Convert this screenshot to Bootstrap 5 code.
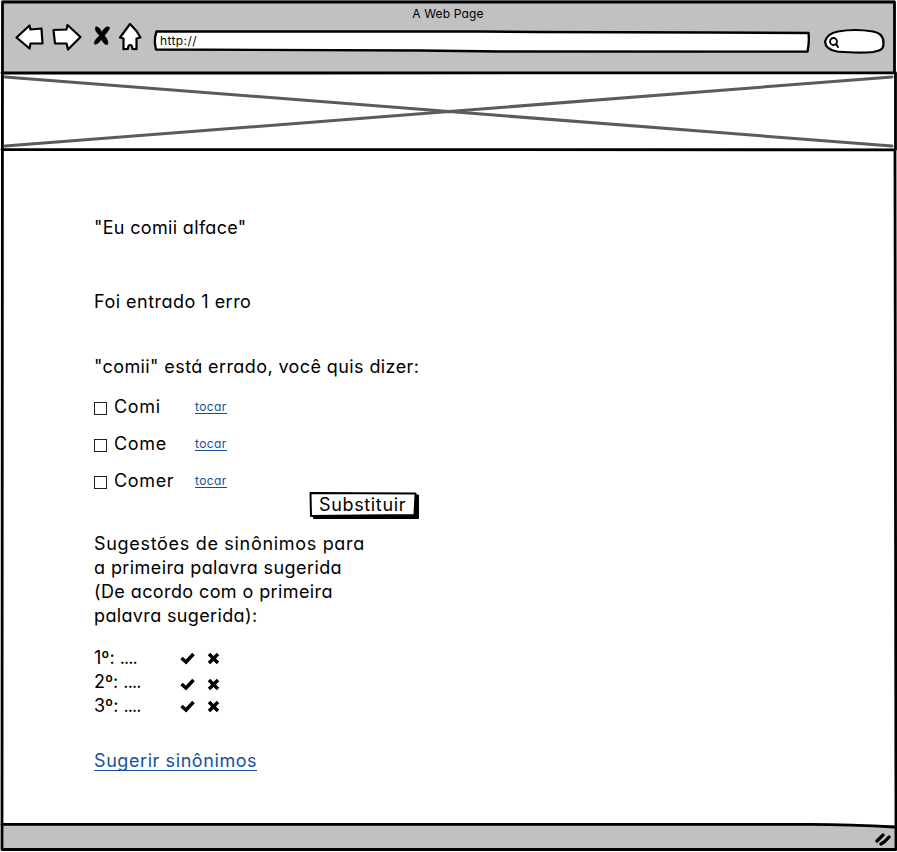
<!DOCTYPE html>
<html lang="pt-BR">
<head>
<meta charset="utf-8">
<meta name="viewport" content="width=device-width, initial-scale=1">
<title>A Web Page</title>
<link href="https://cdn.jsdelivr.net/npm/bootstrap@5.3.0/dist/css/bootstrap.min.css" rel="stylesheet">
<style>
body{font-family:Inter,"Open Sans",sans-serif;font-feature-settings:"cv11" 1,"calt" 0;font-size:18px;line-height:24px;color:#000;background:#fff}
svg{display:block;fill:none;stroke:#000;stroke-linecap:round;stroke-linejoin:round}
.window{width:897px;height:852px;overflow:hidden}
.chrome{background:#c1c1c1;height:72px;margin:0 2px;padding:5px 9px 0 13px}
.chrome-title{font-size:12px;line-height:17px;letter-spacing:.15px;padding-right:5px}
.tools{height:40px}
.address{width:658px;height:26px;font-size:12px;line-height:22px;letter-spacing:.4px;padding-left:7px}
.search-pill{width:62px;height:26px;margin-left:13px}
.sketch{left:0;top:0}
.crossed{height:79px}
.content{height:674px;padding:65px 0 0 94px}
.found{margin-top:50px}
.wrong{margin-top:41px}
.words{display:grid;grid-template-columns:101px auto;row-gap:13px;margin-top:16px}
.word{gap:7px;letter-spacing:.65px}
.tick{width:13px;height:13px;border:1px solid #222;margin-top:2px}
.touch{font-size:12px;letter-spacing:.4px}
a,a:hover{color:#14509a;text-decoration:none}
.touch a{display:inline-block;line-height:14px;height:14px;border-bottom:1px solid #14509a}
.replace{width:111px;height:29px;margin:-2px 0 0 215px;padding:0 0 2px 10px;border:0;background:none;color:#000;line-height:24px;letter-spacing:.65px;text-align:left}
.ranking{margin-top:18px;width:125.5px}
.dots{letter-spacing:-.9px}
.choice{gap:12px}
.suggest{margin-top:31px;letter-spacing:.58px}
.suggest a{display:inline-block;line-height:24px;height:22px;border-bottom:1px solid #14509a}
.status{background:#c1c1c1;height:26px;margin:0 2px;padding:6px 4px 0 0}
.t1{letter-spacing:.33px}.t2{letter-spacing:.48px}.t3{letter-spacing:.4px}
.h-a{letter-spacing:.69px}.h-b{letter-spacing:.41px}.h-c{letter-spacing:.4px}.h-d{letter-spacing:.36px}
</style>
<script src="https://cdn.jsdelivr.net/npm/bootstrap@5.3.0/dist/js/bootstrap.bundle.min.js"></script>
</head>
<body>
<div class="window position-relative">
  <header class="chrome">
    <div class="chrome-title text-center">A Web Page</div>
    <div class="tools d-flex align-items-start">
      <svg width="138" height="40" viewBox="15 22 138 40" stroke-width="2.200" aria-hidden="true">
        <path fill="#fff" d="M16.500 37.500L29.500 25.500L30.500 29.500L41.500 28.500L42.500 43.500L30.500 43.500L29.500 48.500Z"/>
        <path fill="#fff" d="M53.500 30L66.500 29.500L67.500 25L80.500 37L68 49.500L66.500 43.500L55 43.500Z"/>
        <path fill="#000" stroke-width=".6" d="M96 27C99 26.500 100.500 29.500 102 32.500C103.500 28.500 107 25.500 109.500 27.500C109.500 30 106 33.500 104.500 35.500C106 38 109 41 107.500 44.500C104.500 45 102.500 42 101.500 39C99.500 42.500 96.500 45 94.500 44C93.500 41 97.500 38 99.500 35.500C97 32.500 94 30 96 27Z"/>
        <path fill="#fff" d="M130 24L120 37.500L123.500 38.500L123.500 49.200L128 48.800Q128 45 130.200 45Q132.300 45 132.300 48.800L136.500 49.200L136.500 38.500L140.500 37.500L136.500 31Z"/>
      </svg>
      <div class="address position-relative mt-2">
        <svg class="position-absolute sketch" width="658" height="26" viewBox="153 30 658 26" stroke-width="2.300" aria-hidden="true">
          <path fill="#fff" d="M156.500 31.500L480 31.500L540 32L710 32.500L808.500 33Q809.500 42 807.500 51.700L500 51.500L420 50.500L156 49.500Q153.500 40 156.500 31.500Z"/>
        </svg>
        <span class="position-relative">http://</span>
      </div>
      <div class="search-pill mt-2">
        <svg width="62" height="26" viewBox="824 29.500 62 26" stroke-width="2.200" overflow="visible" aria-hidden="true">
          <path fill="#fff" d="M838 31Q855 28 873 31Q884 33 883.500 43C883.500 50 879 50 873 51.500Q860 53 837 51Q825.500 49 825 41Q827 33 838 31Z"/>
          <circle cx="833.500" cy="41" r="3.500" stroke-width="1.800"/><path stroke-width="2" d="M836 43.500L838 46.500"/>
        </svg>
      </div>
    </div>
  </header>
  <section class="crossed">
    <svg width="897" height="79" viewBox="0 72 897 79" aria-hidden="true">
      <g stroke="#5b5b5b" stroke-width="3"><path d="M5 77L892 146M5 146L892 77"/></g>
    </svg>
  </section>
  <main class="content">
    <div class="t1">"Eu comii alface"</div>
    <div class="t2 found">Foi entrado 1 erro</div>
    <div class="t3 wrong">"comii" está errado, você quis dizer:</div>
    <div class="words">
      <label class="word d-flex align-items-center"><span class="tick"></span>Comi</label><div class="touch"><a href="#">tocar</a></div>
      <label class="word d-flex align-items-center"><span class="tick"></span>Come</label><div class="touch"><a href="#">tocar</a></div>
      <label class="word d-flex align-items-center"><span class="tick"></span>Comer</label><div class="touch"><a href="#">tocar</a></div>
    </div>
    <button class="replace d-block position-relative" type="button">
      <svg class="position-absolute sketch" width="111" height="29" viewBox="309 491.500 111 29" aria-hidden="true">
        <path fill="#000" stroke-width="1" d="M313.500 516V519L418.500 519V495.500H415V516Z"/>
        <path fill="#fff" stroke-width="2" d="M310.500 493.500L415.500 494L414.500 515.500L311 516.500Z"/>
      </svg>
      <span class="position-relative">Substituir</span>
    </button>
    <div class="mt-2 pt-1">
      <div class="h-a">Sugestões de sinônimos para</div>
      <div class="h-b">a primeira palavra sugerida</div>
      <div class="h-c">(De acordo com o primeira</div>
      <div class="h-d">palavra sugerida):</div>
    </div>
    <div class="ranking">
      <div class="d-flex justify-content-between"><span>1º: <span class="dots">....</span></span>
        <span class="choice d-flex align-items-center"><svg width="15" height="14" aria-hidden="true"><path stroke-width="3.500" stroke-linecap="butt" stroke-linejoin="miter" d="M1.500 7L6 11L13.500 3"/></svg><svg width="13" height="14" aria-hidden="true"><path stroke-width="3.500" stroke-linecap="butt" d="M2 3L11 12M11 3L2 12"/></svg></span></div>
      <div class="d-flex justify-content-between"><span>2º: <span class="dots">....</span></span>
        <span class="choice d-flex align-items-center pt-1"><svg width="15" height="14" aria-hidden="true"><path stroke-width="3.500" stroke-linecap="butt" stroke-linejoin="miter" d="M1.500 7L6 11L13.500 3"/></svg><svg width="13" height="14" aria-hidden="true"><path stroke-width="3.500" stroke-linecap="butt" d="M2 3L11 12M11 3L2 12"/></svg></span></div>
      <div class="d-flex justify-content-between"><span>3º: <span class="dots">....</span></span>
        <span class="choice d-flex align-items-center"><svg width="15" height="14" aria-hidden="true"><path stroke-width="3.500" stroke-linecap="butt" stroke-linejoin="miter" d="M1.500 7L6 11L13.500 3"/></svg><svg width="13" height="14" aria-hidden="true"><path stroke-width="3.500" stroke-linecap="butt" d="M2 3L11 12M11 3L2 12"/></svg></span></div>
    </div>
    <div class="suggest"><a href="#">Sugerir sinônimos</a></div>
  </main>
  <footer class="status d-flex justify-content-end">
    <svg width="16" height="15" viewBox="875 831 16 15" stroke-width="3.300" aria-hidden="true"><path d="M877 841L883 835M881 844Q885 842 889 837"/></svg>
  </footer>
  <svg class="position-absolute sketch pe-none" width="897" height="852" aria-hidden="true">
    <path stroke-width="2.800" d="M2.500 2L894.500 2L894.500 72M2.500 2L2 849.500L120 849.500L896 849.500L895 151M2 73L300 73L895.500 72.800L895.500 149.800L2 149.500"/>
    <path stroke-width="2.800" d="M2 824.300L810 824.300Q850 824.500 895 827"/>
  </svg>
</div>
</body>
</html>
